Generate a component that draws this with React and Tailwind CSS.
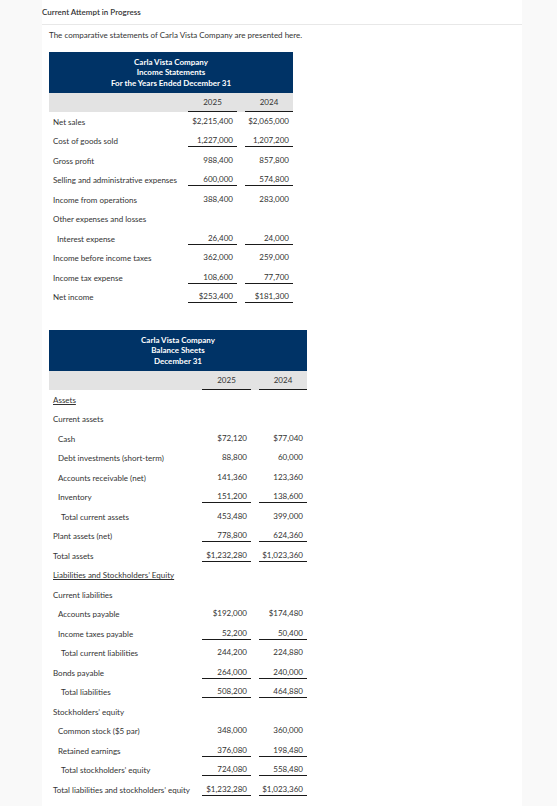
import React from "react";

const incomeRows = [
  { label: "Net sales", a: "$2,215,400", b: "$2,065,000" },
  { label: "Cost of goods sold", a: "1,227,000", b: "1,207,200", line: true },
  { label: "Gross profit", a: "988,400", b: "857,800" },
  { label: "Selling and administrative expenses", a: "600,000", b: "574,800", line: true },
  { label: "Income from operations", a: "388,400", b: "283,000" },
  { label: "Other expenses and losses" },
  { label: "Interest expense", indent: "pl-[8px]", a: "26,400", b: "24,000", line: true },
  { label: "Income before income taxes", a: "362,000", b: "259,000" },
  { label: "Income tax expense", a: "108,600", b: "77,700", line: true },
  { label: "Net income", a: "$253,400", b: "$181,300", line: true },
];

const balanceRows = [
  { label: "Assets", under: true },
  { label: "Current assets" },
  { label: "Cash", indent: "pl-[9px]", a: "$72,120", b: "$77,040" },
  { label: "Debt investments (short-term)", indent: "pl-[9px]", a: "88,800", b: "60,000" },
  { label: "Accounts receivable (net)", indent: "pl-[9px]", a: "141,360", b: "123,360" },
  { label: "Inventory", indent: "pl-[9px]", a: "151,200", b: "138,600", line: true },
  { label: "Total current assets", indent: "pl-[12px]", a: "453,480", b: "399,000" },
  { label: "Plant assets (net)", a: "778,800", b: "624,360", line: true },
  { label: "Total assets", a: "$1,232,280", b: "$1,023,360", line: true },
  { label: "Liabilities and Stockholders\u2019 Equity", under: true },
  { label: "Current liabilities" },
  { label: "Accounts payable", indent: "pl-[9px]", a: "$192,000", b: "$174,480" },
  { label: "Income taxes payable", indent: "pl-[9px]", a: "52,200", b: "50,400", line: true },
  { label: "Total current liabilities", indent: "pl-[12px]", a: "244,200", b: "224,880" },
  { label: "Bonds payable", a: "264,000", b: "240,000", line: true },
  { label: "Total liabilities", indent: "pl-[12px]", a: "508,200", b: "464,880", line: true },
  { label: "Stockholders\u2019 equity" },
  { label: "Common stock ($5 par)", indent: "pl-[9px]", a: "348,000", b: "360,000" },
  { label: "Retained earnings", indent: "pl-[9px]", a: "376,080", b: "198,480", line: true },
  { label: "Total stockholders\u2019 equity", indent: "pl-[12px]", a: "724,080", b: "558,480", line: true },
  { label: "Total liabilities and stockholders\u2019 equity", a: "$1,232,280", b: "$1,023,360", line: true },
];

const Cell = ({ value, line, width }) => (
  <div className={`${width} flex items-center`}>
    {value && (
      <div
        className={`w-full text-right pr-[4px] leading-[10px] pb-[1px] ${
          line ? "border-b border-[#1a1a1a]" : "border-b border-transparent"
        }`}
      >
        {value}
      </div>
    )}
  </div>
);

const Statement = ({ width, title, rows }) => {
  return (
    <div className={width}>
      <div className="bg-[#003366] h-[41px] flex flex-col items-center justify-center text-white font-bold text-[8px] leading-[10.5px]">
        {title.map((t) => (
          <div key={t}>{t}</div>
        ))}
      </div>
      <div className="bg-[#e3e3e3] h-[19px] flex">
        <div className="flex-1" />
        <div className="w-[49px] border-b border-[#1a1a1a] flex items-center justify-center text-[8px] text-[#333]">
          2025
        </div>
        <div className="w-[8px]" />
        <div className="w-[48px] border-b border-[#1a1a1a] flex items-center justify-center text-[8px] text-[#333]">
          2024
        </div>
      </div>
      {rows.map((r) => (
        <div key={r.label} className="h-[19.5px] flex text-[8px] text-[#333]">
          <div className={`flex-1 flex items-center ${r.indent || "pl-[4px]"}`}>
            <span className={r.under ? "underline" : ""}>{r.label}</span>
          </div>
          <Cell value={r.a} line={r.line} width="w-[49px]" />
          <div className="w-[8px]" />
          <Cell value={r.b} line={r.line} width="w-[48px]" />
        </div>
      ))}
    </div>
  );
};

export default function App() {
  return (
    <div className="min-h-screen bg-[#f9f9f9] font-['Lato',sans-serif]">
      <div className="ml-[42px] w-[480px] min-h-[806px] bg-white">
        <div className="h-[25px] border-b border-[#e8e8e8] flex items-center text-[8px] font-semibold text-[#333]">
          Current Attempt in Progress
        </div>
        <div className="pl-[7px]">
          <div className="mt-[5px] h-[10px] text-[8px] leading-[10px] text-[#333]">
            The comparative statements of Carla Vista Company are presented here.
          </div>
          <div className="mt-[12px]">
            <Statement
              width="w-[244px]"
              title={["Carla Vista Company", "Income Statements", "For the Years Ended December 31"]}
              rows={incomeRows}
            />
          </div>
          <div className="mt-[23px]">
            <Statement
              width="w-[258px]"
              title={["Carla Vista Company", "Balance Sheets", "December 31"]}
              rows={balanceRows}
            />
          </div>
        </div>
      </div>
    </div>
  );
}
